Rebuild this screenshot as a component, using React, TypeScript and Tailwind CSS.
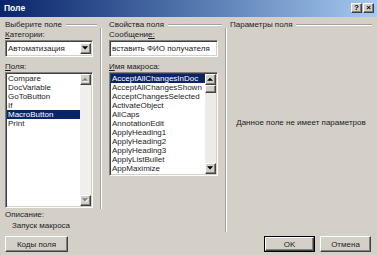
import React from "react";

const raised =
  "bg-[#d4d0c8] border border-t-white border-l-white border-r-[#404040] border-b-[#404040] shadow-[inset_-1px_-1px_0_#808080]";
const sunken =
  "border border-t-[#808080] border-l-[#808080] border-r-white border-b-white shadow-[inset_1px_1px_0_#404040,inset_-1px_-1px_0_#d4d0c8]";

function Tri({ dir, disabled }: { dir: "up" | "down"; disabled?: boolean }) {
  const up = "M0 4h7L3.5 0.5z";
  const down = "M0 0h7L3.5 3.5z";
  return (
    <svg width="7" height="5" viewBox="0 0 8 5">
      {disabled && <path d={dir === "up" ? "M1 5h7L4.5 1.5z" : "M1 1h7L4.5 4.5z"} fill="#fff" />}
      <path d={dir === "up" ? up : down} fill={disabled ? "#808080" : "#000"} />
    </svg>
  );
}

function ScrollBtn({ dir, disabled }: { dir: "up" | "down"; disabled?: boolean }) {
  return (
    <div className={`w-[11px] h-[11px] shrink-0 flex items-center justify-center ${raised}`}>
      <Tri dir={dir} disabled={disabled} />
    </div>
  );
}

function Header({ title, w }: { title: string; w: string }) {
  return (
    <div className={`flex items-center h-[9px] ${w}`}>
      <span className="whitespace-nowrap">{title}</span>
      <div className="flex-1 ml-[4px] h-[2px] border-t border-t-[#a0a0a0] border-b border-b-white" />
    </div>
  );
}

function TitleBtn({ children }: { children: React.ReactNode }) {
  return (
    <div className={`w-[11px] h-[10px] flex items-center justify-center text-[8px] leading-none font-bold text-black ${raised}`}>
      {children}
    </div>
  );
}

function Button({ children, def, w }: { children: React.ReactNode; def?: boolean; w: string }) {
  if (def) {
    return (
      <div className={`h-[16px] ${w} border border-black flex`}>
        <div className={`flex-1 flex items-center justify-center ${raised}`}>{children}</div>
      </div>
    );
  }
  return <div className={`h-[16px] ${w} flex items-center justify-center ${raised}`}>{children}</div>;
}

const leftItems = ["Compare", "DocVariable", "GoToButton", "If", "MacroButton", "Print"];
const macroItems = [
  "AcceptAllChangesInDoc",
  "AcceptAllChangesShown",
  "AcceptChangesSelected",
  "ActivateObject",
  "AllCaps",
  "AnnotationEdit",
  "ApplyHeading1",
  "ApplyHeading2",
  "ApplyHeading3",
  "ApplyListBullet",
  "AppMaximize",
];

export default function App() {
  return (
    <div className="w-[377px] h-[255px] bg-[#d4d0c8] flex flex-col overflow-hidden font-['Liberation_Sans',Arial,sans-serif] text-[8px] leading-[9px] text-[#1c1c1c]">
      {/* title bar */}
      <div className="h-[17px] shrink-0 flex items-center pl-[4px] pr-[3px] bg-linear-to-r from-[#0a246a] to-[#a6caf0]">
        <span className="font-bold text-white text-[8.5px]">Поле</span>
        <div className="ml-auto flex gap-[1px] -mt-[2px]">
          <TitleBtn>?</TitleBtn>
          <TitleBtn>×</TitleBtn>
        </div>
      </div>

      {/* main area */}
      <div className="flex pl-[5px] pt-[3px]">
        {/* left column */}
        <div className="w-[88px] flex flex-col shrink-0">
          <Header title="Выберите поле" w="w-[92px]" />
          <div className="mt-[1px]">
            <span className="underline">К</span>атегории:
          </div>
          <div className={`mt-[1px] h-[17px] flex items-center bg-white ${sunken} pl-[2px] pr-[1px]`}>
            <span className="flex-1">Автоматизация</span>
            <ScrollBtn dir="down" />
          </div>
          <div className="mt-[5px]">
            <span className="underline">П</span>оля:
          </div>
          <div className={`mt-[1px] h-[136px] bg-white flex p-[1px] ${sunken}`}>
            <div className="flex-1 flex flex-col">
              {leftItems.map((it) => (
                <div
                  key={it}
                  className={`h-[9px] px-[1px] whitespace-nowrap ${it === "MacroButton" ? "bg-[#0a246a] text-white" : ""}`}
                >
                  {it}
                </div>
              ))}
            </div>
            <div className="w-[11px] flex flex-col bg-[#f1efeb]">
              <ScrollBtn dir="up" disabled />
              <div className="flex-1" />
              <ScrollBtn dir="down" disabled />
            </div>
          </div>
          <div className="mt-[2px]">Описание:</div>
          <div className="mt-[2px] pl-[7px]">Запуск макроса</div>
        </div>

        {/* separator 1 */}
        <div className="ml-[7px] mt-[8px] w-[2px] h-[181px] border-l border-l-[#a0a0a0] border-r border-r-white shrink-0" />

        {/* middle column */}
        <div className="ml-[7px] w-[109px] flex flex-col shrink-0">
          <Header title="Свойства поля" w="w-[113px]" />
          <div className="mt-[1px]">
            Сообщени<span className="underline">е:</span>
          </div>
          <div className={`mt-[1px] h-[17px] flex items-center bg-white ${sunken} pl-[2px] whitespace-nowrap overflow-hidden`}>
            вставить ФИО получателя
          </div>
          <div className="mt-[5px]">
            <span className="underline">И</span>мя макроса:
          </div>
          <div className={`mt-[1px] h-[104px] bg-white flex p-[1px] ${sunken}`}>
            <div className="flex-1 flex flex-col overflow-hidden">
              {macroItems.map((it, i) => (
                <div
                  key={it}
                  className={`h-[9px] shrink-0 px-[1px] whitespace-nowrap ${i === 0 ? "bg-[#0a246a] text-white" : ""}`}
                >
                  {it}
                </div>
              ))}
            </div>
            <div className="w-[11px] flex flex-col bg-[#ecebe7]">
              <ScrollBtn dir="up" />
              <div className={`w-[11px] h-[8px] ${raised}`} />
              <div className="flex-1" />
              <ScrollBtn dir="down" />
            </div>
          </div>
        </div>

        {/* separator 2 */}
        <div className="ml-[7px] mt-[8px] w-[2px] h-[204px] border-l border-l-[#a0a0a0] border-r border-r-white shrink-0" />

        {/* right column */}
        <div className="ml-[3px] w-[142px] flex flex-col shrink-0">
          <Header title="Параметры поля" w="w-[142px]" />
          <div className="mt-[89px] text-center whitespace-nowrap">Данное поле не имеет параметров</div>
        </div>
      </div>

      {/* bottom row */}
      <div className="flex items-center pl-[5px] pr-[6px] mt-[4px]">
        <Button w="w-[63px]">
          <span>
            Ко<span className="underline">д</span>ы поля
          </span>
        </Button>
        <div className="ml-auto flex gap-[5px]">
          <Button w="w-[51px]" def>
            OK
          </Button>
          <Button w="w-[51px]">Отмена</Button>
        </div>
      </div>
    </div>
  );
}
